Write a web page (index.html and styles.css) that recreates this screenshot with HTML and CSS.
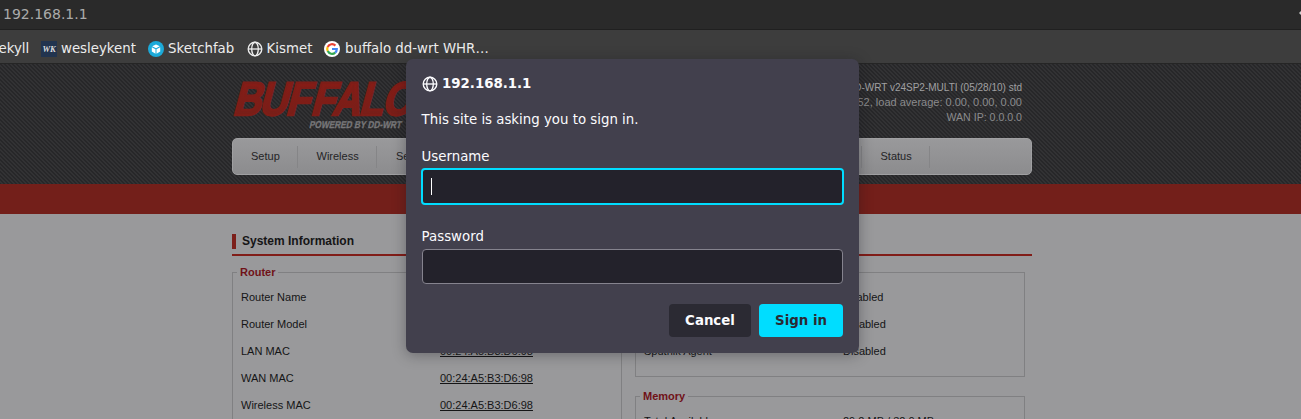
FILE: index.html
```html
<!DOCTYPE html>
<html lang="en">
<head>
<meta charset="utf-8">
<title>DD-WRT - Info</title>
<link rel="stylesheet" href="styles.css">
</head>
<body>
<svg class="defs" width="0" height="0">
  <symbol id="globe" viewBox="0 0 16 16"><g fill="none" stroke="currentColor" stroke-width="1.35"><circle cx="8" cy="8" r="6.8"/><ellipse cx="8" cy="8" rx="3.3" ry="6.8"/><path d="M1.3 8h13.4"/></g></symbol>
</svg>
<div class="urlbar"><span>192.168.1.1</span><svg class="edge-icon" width="2" height="6" viewBox="0 0 2 6"><path d="M2 1 0 3l2 2z"/></svg></div>
<nav class="bookmarks">
  <span class="bm first">ekyll</span>
  <span class="bm wesley"><i class="wk">WK</i>wesleykent</span>
  <span class="bm sketch"><svg width="16" height="16" viewBox="0 0 16 16"><circle cx="8" cy="8" r="8" fill="#1caad9"/><path d="m8 3.5 3.8 1.8L8 7.3 4.2 5.3zM3.8 6.3 7.5 8.2v4.5L3.8 10.6zM12.2 6.3 8.5 8.2v4.5l3.7-2.1z" fill="#fff"/></svg>Sketchfab</span>
  <span class="bm kismet"><svg width="16" height="16"><use href="#globe"/></svg>Kismet</span>
  <span class="bm google"><svg width="16" height="16" viewBox="0 0 16 16"><circle cx="8" cy="8" r="8" fill="#fff"/><g fill="none" stroke-width="2.2"><path d="M11.4 4.6A4.8 4.8 0 0 0 3.7 5.9" stroke="#ea4335"/><path d="M3.7 5.9a4.8 4.8 0 0 0 0 4.2" stroke="#fbbc05"/><path d="M3.7 10.1a4.8 4.8 0 0 0 7.5 1.5" stroke="#34a853"/><path d="M8 8h4.8c0 1.6-.6 2.8-1.6 3.6" stroke="#4285f4"/></g></svg>buffalo dd-wrt WHR…</span>
</nav>
<div class="page">
  <header class="header">
    <div class="wrap">
      <div class="top">
        <svg class="logo" width="230" height="66" viewBox="0 0 230 66">
          <defs><linearGradient id="red" x1="0" y1="0" x2="0" y2="1"><stop offset="0" stop-color="#8b1b15"/><stop offset="1" stop-color="#731f19"/></linearGradient></defs>
          <g class="brand" transform="translate(0 50.7) skewX(-15) scale(.83 1)"><text x="0 31.5 64 94 119.5 152 180" y="0">BUFFALO</text></g>
          <g class="tagline" transform="translate(77 64) skewX(-12)"><text textLength="92" lengthAdjust="spacingAndGlyphs">POWERED BY DD-WRT</text></g>
        </svg>
        <div class="status"><div class="firmware">Firmware: DD-WRT v24SP2-MULTI (05/28/10) std</div><div>Time: 00:01:52 up 52, load average: 0.00, 0.00, 0.00</div><div class="wan">WAN IP: 0.0.0.0</div></div>
      </div>
      <nav class="menu"><span class="setup">Setup</span><span class="wireless">Wireless</span><span class="services">Services</span><span class="state">Status</span></nav>
    </div>
  </header>
  <div class="redbar"></div>
  <main class="wrap content">
    <h2>System Information</h2>
    <div class="columns">
      <section class="box router">
        <h3>Router</h3>
        <div class="row"><span>Router Name</span><span></span></div>
        <div class="row"><span>Router Model</span><span></span></div>
        <div class="row"><span>LAN MAC</span><u>00:24:A5:B3:D6:98</u></div>
        <div class="row"><span>WAN MAC</span><u>00:24:A5:B3:D6:98</u></div>
        <div class="row"><span>Wireless MAC</span><u>00:24:A5:B3:D6:98</u></div>
      </section>
      <div class="side">
        <section class="box services-box">
          <h3>Services</h3>
          <div class="row"><span>DHCP Server</span><span>Enabled</span></div>
          <div class="row"><span>WRT-radauth</span><span>Disabled</span></div>
          <div class="row"><span>Sputnik Agent</span><span>Disabled</span></div>
        </section>
        <section class="box memory">
          <h3>Memory</h3>
          <div class="row"><span>Total Available</span><span>29.2 MB / 32.0 MB</span></div>
        </section>
      </div>
    </div>
  </main>
</div>
<div class="dialog">
  <div class="origin"><svg width="16" height="16"><use href="#globe"/></svg>192.168.1.1</div>
  <p>This site is asking you to sign in.</p>
  <label>Username</label>
  <div class="field focused"><i class="caret"></i></div>
  <label class="pass">Password</label>
  <div class="field"></div>
  <div class="actions"><button class="cancel">Cancel</button><button class="signin">Sign in</button></div>
</div>
</body>
</html>
```

FILE: styles.css
```css
* { box-sizing: border-box; }
body { margin: 0; width: 1301px; height: 419px; overflow: hidden; position: relative; background: #99999b; font: 11px "Liberation Sans", Arial, sans-serif; }
.defs { position: absolute; }
.urlbar { height: 30px; padding: 0 0 1px 3px; display: flex; align-items: center; justify-content: space-between; background: #2a2a2a; border-bottom: 1px solid #202020; color: #aaa; font: 14px "DejaVu Sans", sans-serif; }
.edge-icon { margin-top: -3px; fill: #ccc; }
.bookmarks { height: 34px; padding-top: 3px; display: flex; align-items: center; background: #3d3d3d; border-bottom: 1px solid #252525; color: #ececec; font: 13.33px "DejaVu Sans", sans-serif; white-space: nowrap; }
.bm { display: flex; align-items: center; gap: 4px; }
.first { width: 41px; margin-left: -1.5px; margin-right: 1.5px; }
.wesley { width: 107px; }
.sketch { width: 99px; }
.kismet { width: 77px; gap: 3.6px; }
.google { gap: 5px; }
.bm svg { position: relative; top: 1px; flex: none; }
.wk { width: 16px; height: 16px; margin-top: 2px; background: #22344f; color: #ddd; text-align: center; font: italic bold 8.5px/16px "Liberation Serif", serif; }
.page { height: 355px; overflow: hidden; }
.wrap { width: 800px; margin-left: 232px; }
.header { height: 120px; background: #323234 url("data:image/svg+xml,%3Csvg xmlns='http://www.w3.org/2000/svg' width='4' height='4' shape-rendering='crispEdges'%3E%3Cpath fill='%23272729' d='M0 0h2v1H0zM1 1h2v1H1zM2 2h2v1H2zM3 3h1v1H3zM0 3h1v1H0z'/%3E%3C/svg%3E"); }
.top { height: 74px; display: flex; justify-content: space-between; }
.logo { flex: none; }
.brand { fill: url(#red); stroke: #7e1d17; stroke-width: 2.4px; font: bold 47px "Liberation Sans", sans-serif; }
.tagline { fill: #777779; stroke: #777779; stroke-width: .3px; font: bold 10px "Liberation Sans", sans-serif; }
.status { padding: 16px 10px 0 0; text-align: right; line-height: 15px; color: #8b8b8d; white-space: nowrap; font-size: 11px; }
.firmware { font-size: 10px; color: #a0a0a2; }
.wan { font-size: 10.6px; }
.menu { height: 37px; border: 1px solid #a0a0a2; border-radius: 5px; background: linear-gradient(#99999b, #8c8c8e); display: flex; align-items: center; color: #242426; }
.menu span { height: 22px; line-height: 21px; border-right: 1px solid #858587; }
.setup { width: 65px; padding-left: 18px; }
.wireless { width: 79px; padding-left: 18.5px; }
.services { width: 485px; padding-left: 19px; }
.state { width: 68px; padding-left: 18.5px; }
.redbar { height: 30px; background: #731f1a; }
.content { padding-top: 20px; color: #151516; }
h2 { margin: 0; height: 22px; border-bottom: 2px solid #811d18; font-size: 12px; line-height: 14px; }
h2::before { content: ""; display: inline-block; width: 4px; height: 15px; margin-right: 6px; background: #7c1f1a; vertical-align: top; }
.columns { display: flex; align-items: flex-start; gap: 13px; padding-top: 16px; }
.box { width: 390px; border: 1px solid #808082; }
h3 { margin: -7px 0 0 4px; width: max-content; padding: 0 3px; background: #99999b; color: #701218; font-size: 11px; line-height: 13px; }
.row { height: 27px; line-height: 27px; display: grid; grid-template-columns: 199px 1fr; padding-left: 8px; }
.box h3 { margin-bottom: 5px; }
.router { height: 180px; }
.services-box { height: 105px; margin-bottom: 19px; }
.memory { height: 100px; }
.dialog { position: absolute; left: 406px; top: 59px; width: 453px; height: 294px; padding: 17px 15px 16px; border-radius: 7px; background: #42404d; color: #fbfbfe; font: 13.33px/16px "DejaVu Sans", sans-serif; box-shadow: 0 2px 14px rgba(20,20,25,.35); }
.origin { display: flex; align-items: center; gap: 4px; padding-left: 1px; font-weight: bold; }
.origin svg { margin-top: -1px; }
.dialog p { margin: 20px 0 21px .6px; }
.dialog label { display: block; padding-left: .6px; }
.field { width: 421px; height: 35px; margin: 4px 0 0 1px; border: 1px solid #85838e; border-radius: 4px; background: #23222b; }
.focused { width: 423px; height: 37px; margin: 3px 0 0; border: 2px solid #00ddff; padding: 8px; }
.caret { display: block; width: 1px; height: 17px; background: #fff; }
.dialog .pass { margin-top: 24px; }
.actions { display: flex; justify-content: flex-end; gap: 8px; margin: 20px 1px 0 0; }
button { height: 33px; border: 0; border-radius: 4px; padding: 0; font: bold 13.33px "DejaVu Sans", sans-serif; }
.cancel { width: 82px; background: #2b2a33; color: #fbfbfe; }
.signin { width: 84px; background: #00ddff; color: #2b2a33; }
```
